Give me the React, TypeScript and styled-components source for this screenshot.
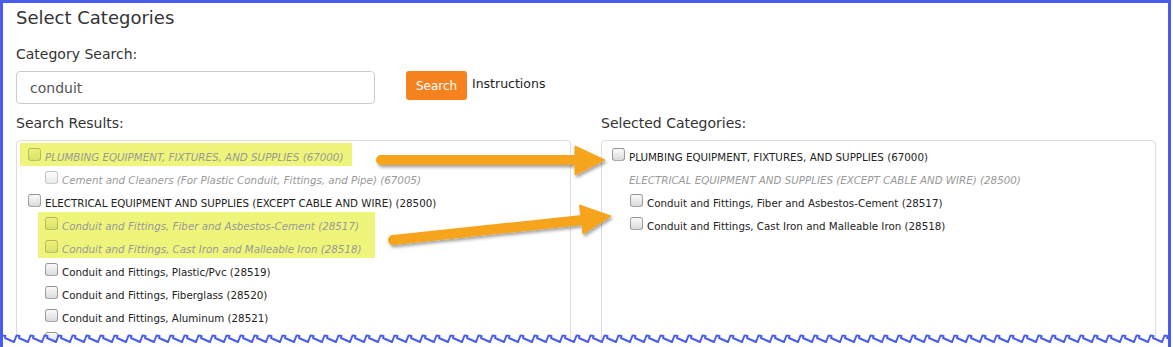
import styled, { createGlobalStyle } from "styled-components";

const GlobalStyle = createGlobalStyle`
  body {
    margin: 0;
    background: #fff;
    font-family: "DejaVu Sans", Verdana, sans-serif;
    color: #333;
  }
`;

type Item = {
  text: string;
  indent: number;
  muted?: boolean;
  noBox?: boolean;
};

type Entry = Item | { mark: { offset: number; width: number }; rows: Item[] };

const results: Entry[] = [
  {
    mark: { offset: 0, width: 332 },
    rows: [{ text: "PLUMBING EQUIPMENT, FIXTURES, AND SUPPLIES (67000)", indent: 8, muted: true }],
  },
  { text: "Cement and Cleaners (For Plastic Conduit, Fittings, and Pipe) (67005)", indent: 25, muted: true },
  { text: "ELECTRICAL EQUIPMENT AND SUPPLIES (EXCEPT CABLE AND WIRE) (28500)", indent: 8 },
  {
    mark: { offset: 18, width: 337 },
    rows: [
      { text: "Conduit and Fittings, Fiber and Asbestos-Cement (28517)", indent: 7, muted: true },
      { text: "Conduit and Fittings, Cast Iron and Malleable Iron (28518)", indent: 7, muted: true },
    ],
  },
  { text: "Conduit and Fittings, Plastic/Pvc (28519)", indent: 25 },
  { text: "Conduit and Fittings, Fiberglass (28520)", indent: 25 },
  { text: "Conduit and Fittings, Aluminum (28521)", indent: 25 },
  // next row is cut by the torn edge, only its box peeks out
  { text: "", indent: 25 },
];

const selected: Item[] = [
  { text: "PLUMBING EQUIPMENT, FIXTURES, AND SUPPLIES (67000)", indent: 7 },
  { text: "ELECTRICAL EQUIPMENT AND SUPPLIES (EXCEPT CABLE AND WIRE) (28500)", indent: 24, muted: true, noBox: true },
  { text: "Conduit and Fittings, Fiber and Asbestos-Cement (28517)", indent: 25 },
  { text: "Conduit and Fittings, Cast Iron and Malleable Iron (28518)", indent: 25 },
];

const Row = ({ item }: { item: Item }) => (
  <Line $indent={item.indent}>
    {!item.noBox && <Box $muted={item.muted} />}
    {item.text && <Label $muted={item.muted}>{item.text}</Label>}
  </Line>
);

const renderEntry = (e: Entry, i: number) =>
  "mark" in e ? (
    <Mark key={i} $offset={e.mark.offset} $width={e.mark.width}>
      {e.rows.map((r, j) => (
        <Row key={j} item={r} />
      ))}
    </Mark>
  ) : (
    <Row key={i} item={e} />
  );

// torn paper edge along the bottom
const tornPath = () => {
  let d = "M0 10";
  for (let x = 0; x < 1180; x += 14) {
    d += ` L${x + 2.5} 3.5 L${x + 5.5} 4 L${x + 5} 6 L${x + 14} 10`;
  }
  return d;
};

const App = () => {
  return (
    <>
      <GlobalStyle />
      <Frame>
        <Title>Select Categories</Title>
        <FieldLabel>Category Search:</FieldLabel>
        <SearchRow>
          <SearchInput defaultValue="conduit" />
          <SearchButton>Search</SearchButton>
          <HelpLink>Instructions</HelpLink>
        </SearchRow>
        <Columns>
          <div>
            <FieldLabel>Search Results:</FieldLabel>
            <Panel>{results.map(renderEntry)}</Panel>
          </div>
          <div>
            <FieldLabel>Selected Categories:</FieldLabel>
            <Panel>
              {selected.map((r, i) => (
                <Row key={i} item={r} />
              ))}
            </Panel>
          </div>
        </Columns>

        <Arrows width="1171" height="347" viewBox="-3 -3 1171 347">
          <defs>
            <filter id="sh" x="-10%" y="-50%" width="120%" height="200%">
              <feDropShadow dx="1.5" dy="2.5" stdDeviation="1.5" floodColor="#000" floodOpacity="0.35" />
            </filter>
          </defs>
          <g filter="url(#sh)" fill="#f6a41c" stroke="#f6a41c">
            <line x1="378" y1="157" x2="576" y2="157" strokeWidth="10" strokeLinecap="round" />
            <polygon points="572,143 602,157 572,172" strokeWidth="1" strokeLinejoin="round" />
            <line x1="390" y1="237" x2="579" y2="217" strokeWidth="10" strokeLinecap="round" />
            <polygon points="576.5,202 608,213 580,231" strokeWidth="1" strokeLinejoin="round" />
          </g>
        </Arrows>

        <Torn width="1173" height="15" viewBox="0 0 1173 15">
          <path d={tornPath() + " L1180 15 L0 15 Z"} fill="#fff" stroke="none" />
          <path d={tornPath()} fill="none" stroke="#4a5cf0" strokeWidth="2" strokeLinejoin="round" />
        </Torn>
      </Frame>
    </>
  );
};

export default App;

const Frame = styled.div`
  position: relative;
  width: 1171px;
  height: 347px;
  box-sizing: border-box;
  border: 3px solid #4a5cf0;
  border-bottom: none;
  padding: 0 13px;
  overflow: hidden;
`;

const Title = styled.h2`
  margin: 0;
  padding-top: 3px;
  font-size: 18px;
  font-weight: normal;
  line-height: 24px;
  color: #333;
`;

const FieldLabel = styled.div`
  margin-top: 14px;
  font-size: 14px;
  line-height: 20px;
  color: #333;
`;

const SearchRow = styled.div`
  display: flex;
  align-items: flex-start;
  margin-top: 7px;
`;

const SearchInput = styled.input`
  width: 359px;
  height: 33px;
  box-sizing: border-box;
  border: 1px solid #ccc;
  border-radius: 4px;
  padding: 0 13px;
  font-family: inherit;
  font-size: 14px;
  color: #555;
  outline: none;
`;

const SearchButton = styled.button`
  margin-left: 31px;
  width: 61px;
  height: 29px;
  border: none;
  border-radius: 3px;
  background: #f5821f;
  color: #fff;
  font-family: inherit;
  font-size: 12px;
  padding: 0;
`;

const HelpLink = styled.span`
  margin-left: 5px;
  font-size: 12.5px;
  line-height: 26px;
  color: #222;
`;

const Columns = styled.div`
  display: grid;
  grid-template-columns: 555px 555px;
  column-gap: 30px;
  margin-top: -5px;
`;

const Panel = styled.div`
  margin-top: 7px;
  height: 260px;
  border: 1px solid #ddd;
  border-radius: 4px;
  padding: 2px 3px 1px;
`;

const Mark = styled.div<{ $offset: number; $width: number }>`
  margin-left: ${(p) => p.$offset}px;
  width: ${(p) => p.$width}px;
  background: #eff57a;
`;

const Line = styled.div<{ $indent: number }>`
  display: flex;
  align-items: center;
  height: 23px;
  padding-left: ${(p) => p.$indent}px;
`;

const Box = styled.span<{ $muted?: boolean }>`
  flex: none;
  width: 13px;
  height: 13px;
  box-sizing: border-box;
  border: 1px solid rgba(0, 0, 0, 0.33);
  border-radius: 3px;
  background: linear-gradient(rgba(0, 0, 0, 0.02), rgba(0, 0, 0, 0.14));
  margin-right: 4px;
  opacity: ${(p) => (p.$muted ? 0.6 : 1)};
`;

const Label = styled.span<{ $muted?: boolean }>`
  padding-top: 5px;
  font-size: 10.3px;
  white-space: nowrap;
  font-style: ${(p) => (p.$muted ? "italic" : "normal")};
  color: ${(p) => (p.$muted ? "#999" : "#222")};
`;

const Arrows = styled.svg`
  position: absolute;
  left: -3px;
  top: -3px;
  pointer-events: none;
`;

const Torn = styled.svg`
  position: absolute;
  left: -3px;
  bottom: 0;
`;
